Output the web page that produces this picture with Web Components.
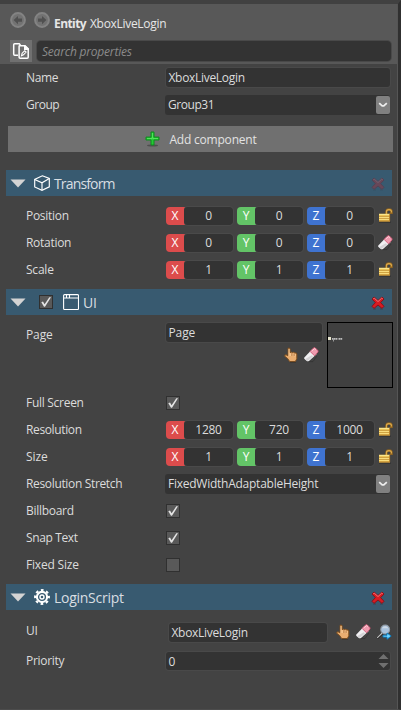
<!DOCTYPE html>
<html lang="en"><head><meta charset="utf-8"><title>Property grid</title>
<style>
html,body{margin:0;padding:0;height:710px;overflow:hidden;background:#434343}
body{font-family:"Open Sans","Noto Sans",sans-serif;font-size:12px;color:#dcdcdc}
</style></head><body>
<property-panel></property-panel>
<script>
const define=(name,html,setup)=>customElements.define(name,class extends HTMLElement{
  connectedCallback(){
    if(this.shadowRoot)return;
    const root=this.attachShadow({mode:"open"});
    const t=document.createElement("template");
    t.innerHTML=typeof html==="function"?html(this):html;
    root.append(t.content.cloneNode(true));
    if(setup)setup(this,root);
  }
});

/* Text run whose tracking is adjusted to fill the width in "w". */
define("fit-text",el=>`<style>:host{display:inline-block;white-space:pre;line-height:normal;flex:none}span{display:inline-block}</style><span>${el.getAttribute("text")}</span>`,(el,root)=>{
  const w=+el.getAttribute("w"),s=root.querySelector("span");
  if(w){const n=s.textContent.length;s.style.letterSpacing=((w-.8-s.getBoundingClientRect().width)/n).toFixed(3)+"px";}
});

const icons={
back:[16,16,`<circle cx="8" cy="8" r="6.9" fill="#727272" stroke="#838383" stroke-width="2"/><path d="M3.6 8 8 4V6.4H12V9.8H8V12.2Z" fill="#505050"/>`],
fwd:[16,16,`<circle cx="8" cy="8" r="6.9" fill="#727272" stroke="#838383" stroke-width="2"/><path d="M12.4 8 8 4V6.4H4V9.8H8V12.2Z" fill="#505050"/>`],
pages:[22,22,`<rect width="22" height="22" fill="#707070"/><g fill="none" stroke="#fff" stroke-width="1.5"><path d="M8 15.2H4.7Q3.7 15.2 3.7 14V4.7Q3.7 3.7 4.7 3.7H9.2L10.5 5"/><path d="M9.6 5.7H14.7L18.2 9.2V17.3Q18.2 18.2 17.2 18.2H10.1Q9.1 18.2 9.1 17.3V6.2Q9.1 5.7 9.6 5.7Z"/><path d="M11.5 15.7 12.1 13.3 14.7 10.7 16.1 12.1 13.5 14.8Z" stroke-width="1.1"/></g><path d="M14 5V10H19V8.6L15.2 5Z" fill="#fff"/>`],
plus:[15,16,`<ellipse cx="7.5" cy="14.5" rx="5.5" ry="1" fill="#333" opacity=".55"/><path d="M6 1H9V6.1H14V9H9V14H6V9H1V6.1H6Z" fill="#25c936" stroke="#0c8c1c"/><path d="M7.5 2V7.5H13M2 7.5H7" stroke="#53e25c" fill="none"/>`],
cube:[16,16,`<g fill="none" stroke="#fff" stroke-width="1.15"><path d="M8.3.8 15.3 3.4V11.8L8 15.3.7 12V4.4Z"/><path d="M.7 4.4 8 7.8 15.3 3.6M8 7.8V15.3"/></g>`],
win:[16,16,`<path d="M1.6.6H14.4Q15.5.6 15.5 1.6V14.4Q15.5 15.5 14.4 15.5H1.6Q.6 15.5.6 14.4V1.6Q.6.6 1.6.6ZM.6 4H15.5M3.5.8V4M6.5.8V4" stroke="#fff" stroke-width="1.1" fill="none"/>`],
gear:[16,16,`<g fill="none" stroke="#fff"><circle cx="8" cy="8" r="5.1" stroke-width="2.1"/><circle cx="8" cy="8" r="2" stroke-width="1.4"/><circle cx="8" cy="8" r="6.9" stroke-width="2.1" stroke-dasharray="2.7 2.719" stroke-dashoffset="1.35"/></g>`],
cross:[14,14,`<path d="M2 13H5M9 13H12" stroke="#222" stroke-width="1" opacity=".35"/><path d="M3 1 7 4.5 11 1 13 3 9.6 6.6 13 10.3 11 12.4 7 9 3 12.4 1 10.3 4.4 6.6 1 3Z" fill="#d71c23" stroke="#8b1119" stroke-width="1"/><path d="M2.4 2.8 3.2 2 7 5.5 10.8 2 11.7 2.8" fill="none" stroke="#f4777a"/>`],
lock:[15,15,`<path d="M1 14.2H13" stroke="#222" opacity=".5"/><path d="M8.4 6V3.7Q8.4 1.5 11 1.5 13.6 1.5 13.6 3.7V4.9H12" fill="none" stroke="#8f6420" stroke-width="2.3"/><path d="M8.4 6V3.7Q8.4 1.6 11 1.6 13.5 1.6 13.5 3.7V4.5" fill="none" stroke="#dcaa4a" stroke-width="1.1"/><path d="M1 5.7H12V13.5H1Z" fill="#ecc355"/><path d="M1 6.5H12" stroke="#f8e58e"/><path d="M1 8.5H12M1 10.5H12" stroke="#c99a3e" stroke-width=".8"/><path d="M1 9.5H11M1 11.5H11" stroke="#f9dd7d"/><path d="M1 13H12M11.6 6V13" stroke="#b47c26" stroke-width=".9"/>`],
eraser:[16,16,`<path d="M5 14.6H10L14 9" fill="none" stroke="#252525" opacity=".4"/><path d="M1.3 10.4 9.2 2.2 14 6.7 6 14Q4.7 14.8 3.5 13.8L1.5 12Q.7 11.2 1.3 10.4Z" fill="#f1f0f2"/><path d="M2 12.3 4.7 14.1 10 9.5 8.7 8.3Z" fill="#d5d3d6"/><path d="M7.1 4.4 10.7.8Q11.5.2 12.4 1L14.9 3.5Q15.4 4.4 14.8 5.2L11.5 8.8Z" fill="#ef9baf" stroke="#cb4f6e" stroke-width=".8"/><path d="M8.7 4 11.7 1.5 13 2.7" stroke="#ffd1d9" fill="none"/>`],
hand:[14,16,`<path d="M4.1 1.2Q5.6.4 6.1 1.9V5.7L7.2 5 8.4 5.7 9.8 5.1 10.7 6.1 12.2 5.9 12.8 7V11.8L11.3 14.6H5.7L3.7 11.6.8 9.3Q.4 7.8 2 7.7L4 8.9Z" fill="#e9ad70" stroke="#80501f" stroke-width="1"/><path d="M5 2V9M6.8 6.2V9M9 6.2V9M11 7V9.5" stroke="#ffd6a5" stroke-width=".8"/><path d="M7.9 6.2V9M10.1 6.4V9" stroke="#a86d38" stroke-width=".8"/><path d="M6 15.3H12" stroke="#222" opacity=".4"/>`],
find:[16,16,`<path d="M1.2 14.3 6.4 9.3" stroke="#222" stroke-width="2.2"/><path d="M1.2 13.8 6.2 9" stroke="#c6c6c6" stroke-width="1.1"/><circle cx="9.2" cy="5.5" r="4.4" fill="#a9c2dc" stroke="#929da8" stroke-width="1.1"/><path d="M5.8 4.3Q9.2.3 12.6 4.3" fill="#ced9e5"/><path d="M7 11.2H11V9L15.2 12.1 11 15.3V13.1H7Z" fill="#72d5ff" stroke="#087cc2" stroke-width=".9"/>`]
};
define("ui-icon",el=>{const[w,h,b]=icons[el.getAttribute("name")];
 return `<style>:host{display:block;flex:none;width:${w}px;height:${h}px}svg{display:block}</style><svg width="${w}" height="${h}" viewBox="0 0 ${w} ${h}">${b}</svg>`});

define("check-box",el=>`<style>:host{display:block;flex:none;width:14px;height:14px;box-sizing:border-box;border:1px solid #303030;background:#595959}svg{display:block}</style>
<svg width="12" height="12" viewBox="0 0 12 12">${el.hasAttribute("checked")?'<path d="M1.3 6.2 3 5.5 4.6 8.3 9.3 1.3H11L5 10.7H4Z" fill="#e4e4e4"/>':""}</svg>`);

define("text-field",`<style>:host{display:flex;align-items:center;box-sizing:border-box;height:19px;background:#333;box-shadow:0 0 0 1px #494949;border-radius:3px;padding-left:2.5px;flex:none;justify-content:space-between}
.arrows{display:none;margin-right:1px}:host([spin]) .arrows{display:block}</style><slot></slot>
<svg class="arrows" width="11" height="16" viewBox="0 0 11 16"><path d="M5.5 1 10.5 6H.5ZM.5 10H10.5L5.5 15Z" fill="#707070"/></svg>`);

define("combo-box",`<style>:host{display:flex;box-sizing:border-box;width:225px;height:20px;background:#333;border-radius:3px;align-items:center;justify-content:space-between;padding-left:3px;flex:none}
i{display:grid;place-items:center;width:14px;height:18px;background:#808080;border-radius:2px}</style><slot></slot><i><svg width="10" height="6" viewBox="0 0 10 6"><path d="M1.2 1.2 4.2 3.9H5.8L8.8 1.2" fill="none" stroke="#ededed" stroke-width="1.8"/></svg></i>`);

define("vector-field",el=>{
 const vals=el.getAttribute("values").split(","),c=["#dc4c4c","#63c467","#3f73d0"],fw=[49,48,49];
 return `<style>:host{display:flex;gap:4px;align-items:center;flex:none}
 .g{display:flex;height:18px;border-radius:4px;padding-left:18px;position:relative}
 b{position:absolute;left:0;top:0;width:18px;height:18px;display:grid;place-items:center;color:#fff;font-weight:400;line-height:18px}
 span{display:block;height:18px;box-shadow:0 1px #4a4a4a,0 -1px #4a4a4a,1px 0 #4a4a4a;background:#333;border-radius:4px;line-height:18px;text-align:center;letter-spacing:-.25px}</style>`+
 vals.map((v,i)=>`<div class="g" style="background:linear-gradient(90deg,${c[i]} 22px,transparent 22px)"><b>${"XYZ"[i]}</b><span style="width:${fw[i]}px">${v}</span></div>`).join("");
});

define("prop-row",el=>`<style>:host{display:flex;height:27px;align-items:center;padding-left:26px;box-sizing:border-box}
.l{width:140px;flex:none;display:flex}</style><div class="l"><fit-text text="${el.getAttribute("label")}" w="${el.getAttribute("w")}"></fit-text></div><slot></slot>`);

define("section-head",el=>`<style>:host{display:flex;align-items:center;height:26px;margin:6px 5px 0 6px;background:#385a70;box-sizing:border-box;padding:0 7px 0 4px;font-size:14px;color:#d8dee2}
.tri{margin-right:8px;flex:none}.x{margin:1px 0 0 auto;opacity:${el.hasAttribute("locked")?.3:1}}check-box{margin:0 10px 0 5px}fit-text{margin:1px 0 0 4px}</style>
<svg class="tri" width="16" height="9" viewBox="0 0 16 9"><path d="M.5.5H15.5L8 8.5Z" fill="#d3d3d3"/></svg>
${el.hasAttribute("toggle")?"<check-box checked></check-box>":""}<ui-icon name="${el.getAttribute("icon")}"></ui-icon><fit-text text="${el.getAttribute("title-text")}" w="${el.getAttribute("w")}"></fit-text><ui-icon class="x" name="cross"></ui-icon>`);

define("entity-header",`<style>:host{display:block;height:60px;background:#585858;box-sizing:border-box;padding:8px 0 0 10px}
.t{display:flex;height:26px}.t ui-icon{margin-right:8px}.t fit-text{margin-top:3px;color:#e6e6e6}.t .b{font-weight:700;margin:3px 4px 0 -4px}
.s{display:flex;align-items:center;margin-top:2px;gap:5px}text-field{width:354px;height:20px;padding-left:5px;font-style:italic;color:#8b8b8b;border-radius:4px}</style>
<div class="t"><ui-icon name="back"></ui-icon><ui-icon name="fwd"></ui-icon><fit-text class="b" text="Entity" w="32.8"></fit-text><fit-text text="XboxLiveLogin" w="77"></fit-text></div>
<div class="s"><ui-icon name="pages"></ui-icon><text-field><fit-text text="Search properties" w="90.5"></fit-text></text-field></div>`);

define("add-button",`<style>:host{display:flex;height:26px;margin:8px 8px 12px;background:#707070;align-items:center;justify-content:center;gap:9px;padding-left:1px;box-sizing:border-box;width:385px;color:#e2e2e2}</style><ui-icon name="plus"></ui-icon><fit-text text="Add component" w="88"></fit-text>`);

define("page-preview",`<style>:host{display:block;box-sizing:border-box;width:66px;height:66px;border:1px solid #000;background:#404040;flex:none}svg{display:block}</style>
<svg width="64" height="64" viewBox="0 0 64 64"><path d="M0 14H3V17H0Z" fill="#e9e7cf"/><path d="M4 15.9H9.4M10.5 15.9H14.5" stroke="#bdbdbd" stroke-width="1.7" stroke-dasharray="1.7 .3"/><path d="M5.5 16V18.5" stroke="#999"/></svg>`);

define("property-panel",`<style>:host{display:block;width:401px;height:710px;box-sizing:border-box;background:#434343;border-top:4px solid #414141;border-right:3px solid #303030;border-bottom:1px solid #4c4c4c}
main{border-right:1px solid #555;height:705px}
.page{display:flex;height:74px;padding:7px 0 0 26px;box-sizing:border-box}.page>fit-text{width:140px;margin-top:4px}.mid{width:156px;margin-right:5px}.mid text-field{margin:.5px 0}.tools{display:flex;justify-content:flex-end;gap:5px;margin:5px 3px 0 0}
.lock{margin-left:4px}.script{height:37px;padding-top:3px}.script text-field{width:158px;margin:4px 9px 0 3px}.script ui-icon{margin:3px 5px 0 0}
</style><main>
<entity-header></entity-header>
<prop-row label="Name" w="33"><text-field style="width:224px"><fit-text text="XboxLiveLogin" w="77"></fit-text></text-field></prop-row>
<prop-row label="Group" w="34"><combo-box style="margin-left:-1px"><fit-text text="Group31" w="47"></fit-text></combo-box></prop-row>
<add-button></add-button>
<section-head style="margin-top:18px" icon="cube" title-text="Transform" w="61.5" locked></section-head>
<div style="height:6px"></div>
<prop-row label="Position" w="43.5"><vector-field values="0,0,0"></vector-field><ui-icon class="lock" name="lock"></ui-icon></prop-row>
<prop-row label="Rotation" w="46"><vector-field values="0,0,0"></vector-field><ui-icon class="lock" style="margin-left:3px" name="eraser"></ui-icon></prop-row>
<prop-row label="Scale" w="28.5"><vector-field values="1,1,1"></vector-field><ui-icon class="lock" name="lock"></ui-icon></prop-row>
<section-head toggle icon="win" title-text="UI" w="14.5"></section-head>
<div class="page"><fit-text text="Page" w="27.5"></fit-text><div class="mid"><text-field><fit-text text="Page" w="27.5"></fit-text></text-field><div class="tools"><ui-icon name="hand"></ui-icon><ui-icon name="eraser"></ui-icon></div></div><page-preview></page-preview></div>
<prop-row label="Full Screen" w="58.5"><check-box checked></check-box></prop-row>
<prop-row label="Resolution" w="56.5"><vector-field values="1280,720,1000"></vector-field><ui-icon class="lock" name="lock"></ui-icon></prop-row>
<prop-row label="Size" w="22.5"><vector-field values="1,1,1"></vector-field><ui-icon class="lock" name="lock"></ui-icon></prop-row>
<prop-row label="Resolution Stretch" w="97"><combo-box style="margin-left:-1px"><fit-text text="FixedWidthAdaptableHeight" w="151"></fit-text></combo-box></prop-row>
<prop-row label="Billboard" w="48.5"><check-box checked></check-box></prop-row>
<prop-row label="Snap Text" w="52.5"><check-box checked></check-box></prop-row>
<prop-row label="Fixed Size" w="53.5"><check-box></check-box></prop-row>
<section-head icon="gear" title-text="LoginScript" w="70.5"></section-head>
<prop-row class="script" label="UI" w="12.5"><text-field><fit-text text="XboxLiveLogin" w="77"></fit-text></text-field><ui-icon name="hand"></ui-icon><ui-icon name="eraser"></ui-icon><ui-icon name="find"></ui-icon></prop-row>
<prop-row label="Priority" w="39"><text-field spin style="width:224px;height:18px;margin-top:1px"><fit-text text="0"></fit-text></text-field></prop-row>
</main>`);
</script></body></html>
